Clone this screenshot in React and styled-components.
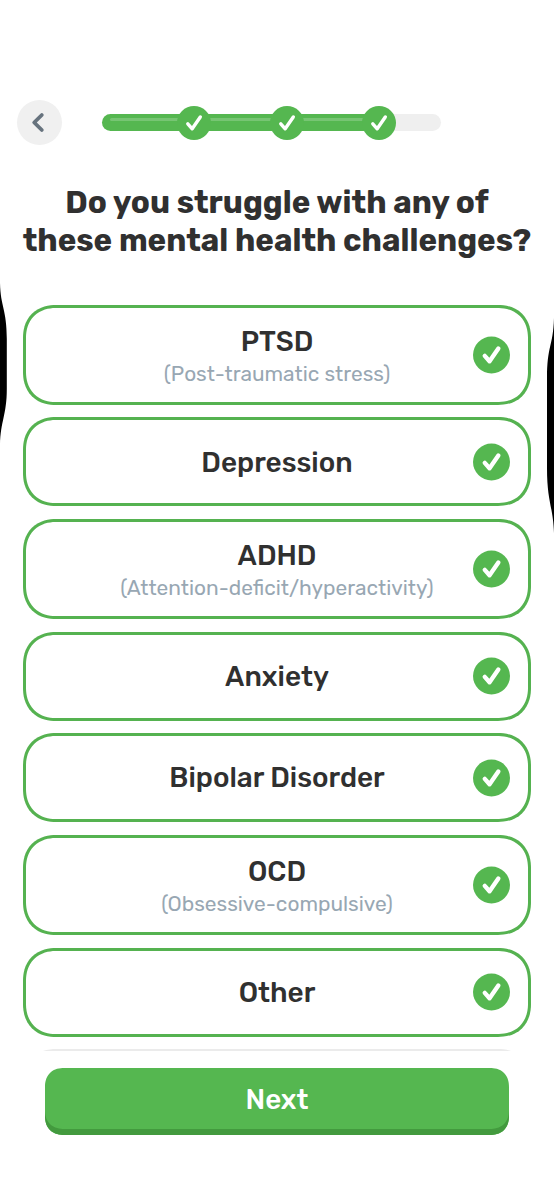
import styled, { createGlobalStyle } from "styled-components";

const challenges = [
  { title: "PTSD", note: "(Post-traumatic stress)" },
  { title: "Depression" },
  { title: "ADHD", note: "(Attention-deficit/hyperactivity)" },
  { title: "Anxiety" },
  { title: "Bipolar Disorder" },
  { title: "OCD", note: "(Obsessive-compulsive)" },
  { title: "Other" },
];

const Check = ({ size, stroke }) => (
  <svg width={size} height={size} viewBox="0 0 34 34" fill="none">
    <path
      d="M10.8 17.8 L15.2 22.8 L23.3 11"
      stroke="#fff"
      strokeWidth={stroke}
      strokeLinecap="round"
      strokeLinejoin="round"
    />
  </svg>
);

const App = () => {
  return (
    <Screen>
      <GlobalStyle />
      <Header>
        <BackButton aria-label="Back">
          <svg width="45" height="45" viewBox="0 0 45 45" fill="none">
            <path
              d="M24.8 15 L17.2 22.5 L24.8 30"
              stroke="#67737e"
              strokeWidth="3.8"
              strokeLinecap="round"
              strokeLinejoin="round"
            />
          </svg>
        </BackButton>
        <Progress>
          <Step $first />
          <Dot>
            <Check size={34} stroke={3.4} />
          </Dot>
          <Step />
          <Dot>
            <Check size={34} stroke={3.4} />
          </Dot>
          <Step />
          <Dot>
            <Check size={34} stroke={3.4} />
          </Dot>
          <Rest />
        </Progress>
      </Header>
      <Heading>
        <span>Do you struggle with any of</span>
        <span>these mental health challenges?</span>
      </Heading>
      <List>
        {challenges.map((item) => (
          <Option key={item.title} $tall={Boolean(item.note)}>
            <Title>{item.title}</Title>
            {item.note && <Note>{item.note}</Note>}
            <Badge>
              <Check size={37} stroke={4} />
            </Badge>
          </Option>
        ))}
        <Option $empty />
      </List>
      <NextButton>Next</NextButton>
      <Edge $side="left" width="8" height="164" viewBox="0 0 8 164">
        <path d="M0 0 C0.5 24 6.8 26 6.8 56 V106 C6.8 132 0.5 138 0 162 Z" />
      </Edge>
      <Edge $side="right" width="8" height="216" viewBox="0 0 8 216">
        <path d="M8 0 C7 30 1 26 1 62 V150 C1 184 7 188 8 215 Z" />
      </Edge>
    </Screen>
  );
};

const GlobalStyle = createGlobalStyle`
  * {
    box-sizing: border-box;
  }

  body {
    margin: 0;
    background-color: #fff;
    font-family: Rubik, Inter, sans-serif;
  }
`;

const Screen = styled.div`
  position: relative;
  display: flex;
  flex-direction: column;
  width: 554px;
  height: 1200px;
  padding-top: 100px;
  overflow: hidden;
  background-color: #fff;
`;

const Header = styled.div`
  display: flex;
  align-items: center;
  gap: 39.5px;
  height: 45px;
  padding-left: 17px;
`;

const BackButton = styled.button`
  width: 45px;
  height: 45px;
  padding: 0;
  border: none;
  border-radius: 50%;
  background-color: #f0f0f0;

  svg {
    display: block;
  }
`;

const Progress = styled.div`
  display: flex;
  align-items: center;
  width: 339.5px;
`;

const Step = styled.div`
  flex: none;
  width: ${({ $first }) => ($first ? 78.5 : 64.6)}px;
  height: 17px;
  margin-right: -3px;
  margin-left: ${({ $first }) => ($first ? 0 : -3)}px;
  padding: 4px 0 0 ${({ $first }) => ($first ? 8 : 0)}px;
  border-radius: ${({ $first }) => ($first ? "9px 0 0 9px" : 0)};
  background-color: #55b750;

  &::before {
    content: "";
    display: block;
    height: 3px;
    border-radius: 2px;
    background-color: #77c573;
  }
`;

const Dot = styled.div`
  z-index: 1;
  flex: none;
  width: 34px;
  height: 34px;
  border-radius: 50%;
  background-color: #55b750;

  svg {
    display: block;
  }
`;

const Rest = styled.div`
  flex: 1;
  height: 17px;
  margin-left: -3px;
  border-radius: 0 9px 9px 0;
  background-color: #efefef;
`;

const Heading = styled.h1`
  display: flex;
  flex-direction: column;
  align-items: center;
  margin: 39px 0 0;
  color: #303030;
  font-size: 31.35px;
  font-weight: 700;
  line-height: 38px;
  white-space: nowrap;
`;

const List = styled.div`
  display: flex;
  flex-direction: column;
  gap: 12.5px;
  height: 746.6px;
  margin-top: 44.7px;
  padding: 0 23px;
  overflow: hidden;
`;

const Option = styled.div`
  position: relative;
  display: flex;
  flex: none;
  flex-direction: column;
  align-items: center;
  justify-content: center;
  height: ${({ $tall }) => ($tall ? 100.3 : 89)}px;
  padding-top: ${({ $tall }) => ($tall ? 2.4 : 1.4)}px;
  border: 3px solid ${({ $empty }) => ($empty ? "#ebebeb" : "#55b250")};
  border-radius: 33px;
  corner-shape: superellipse(1.15);
`;

const Title = styled.div`
  color: #303030;
  font-size: 27.9px;
  font-weight: 500;
  line-height: 34px;
`;

const Note = styled.div`
  color: #98a7b3;
  font-size: 20.9px;
  line-height: 29px;
`;

const Badge = styled.div`
  position: absolute;
  top: 50%;
  right: 18px;
  width: 37px;
  height: 37px;
  border-radius: 50%;
  background-color: #55b750;
  transform: translateY(-50%);

  svg {
    display: block;
  }
`;

const NextButton = styled.button`
  width: 464px;
  height: 67.5px;
  margin: 16.5px 0 0 45px;
  padding: 0 0 4px;
  border: none;
  border-radius: 19px;
  corner-shape: superellipse(1.2);
  background-color: #55b750;
  box-shadow: inset 0 -6px 0 #439a3e;
  color: #fff;
  font-family: inherit;
  font-size: 27.8px;
  font-weight: 500;
`;

const Edge = styled.svg`
  position: absolute;
  top: ${({ $side }) => ($side === "left" ? 283 : 318)}px;
  ${({ $side }) => $side}: 0;
`;

export default App;
